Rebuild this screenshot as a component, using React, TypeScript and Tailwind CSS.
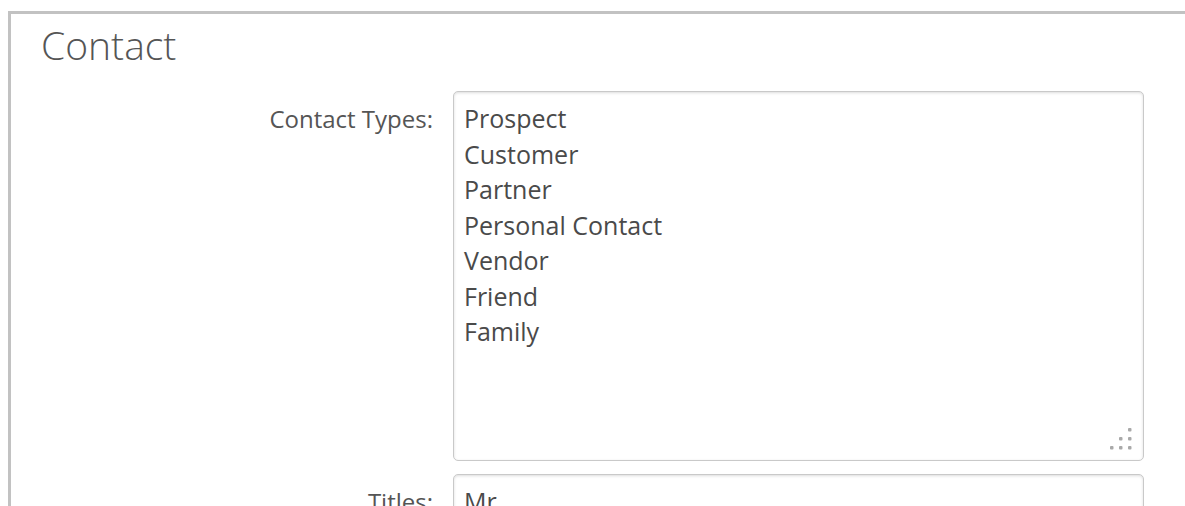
const contactTypes = [
  "Prospect",
  "Customer",
  "Partner",
  "Personal Contact",
  "Vendor",
  "Friend",
  "Family",
];

function ResizeGrip() {
  // little dotted triangle in the corner of a resizable textarea
  const dots = [
    [18, 0],
    [9, 9],
    [18, 9],
    [0, 18],
    [9, 18],
    [18, 18],
  ];
  return (
    <svg
      className="pointer-events-none absolute bottom-[10px] right-[11px]"
      width="22"
      height="22"
      viewBox="0 0 22 22"
    >
      {dots.map(([x, y]) => (
        <rect key={`${x}-${y}`} x={x} y={y} width="3.5" height="3.5" rx="1" fill="#a9a9a9" />
      ))}
    </svg>
  );
}

function FieldRow({
  label,
  height,
  lines,
  grip,
}: {
  label: string;
  height: string;
  lines: string[];
  grip?: boolean;
}) {
  return (
    <div className="grid grid-cols-[422px_691px] gap-x-[20px]">
      <div className="pt-[10px] text-right text-[24px] leading-[35.5px] text-[#555]">
        {label}
      </div>
      <div
        className={`relative overflow-hidden rounded-[5px] border border-[#c9c9c9] bg-white pl-[10px] pt-[9px] shadow-[inset_0_1px_3px_rgba(0,0,0,0.14)] ${height}`}
      >
        {lines.map((line) => (
          <div key={line} className="text-[25px] leading-[35.5px] text-[#4a4a4a]">
            {line}
          </div>
        ))}
        {grip && <ResizeGrip />}
      </div>
    </div>
  );
}

export default function App() {
  return (
    <div
      className="h-[506px] overflow-hidden bg-white pl-2 pt-[11px]"
      style={{ fontFamily: '"Open Sans", "Noto Sans", sans-serif' }}
    >
      <section className="h-full border-l-[3px] border-t-[3px] border-[#c2c2c2]">
        <h2 className="pl-[30px] pt-[7px] text-[39px] font-light leading-[48px] text-[#555]">
          Contact
        </h2>
        <div className="mt-[22px] flex flex-col gap-[13px]">
          <FieldRow label="Contact Types:" height="h-[370px]" lines={contactTypes} grip />
          <FieldRow label="Titles:" height="h-[120px]" lines={["Mr."]} />
        </div>
      </section>
    </div>
  );
}
